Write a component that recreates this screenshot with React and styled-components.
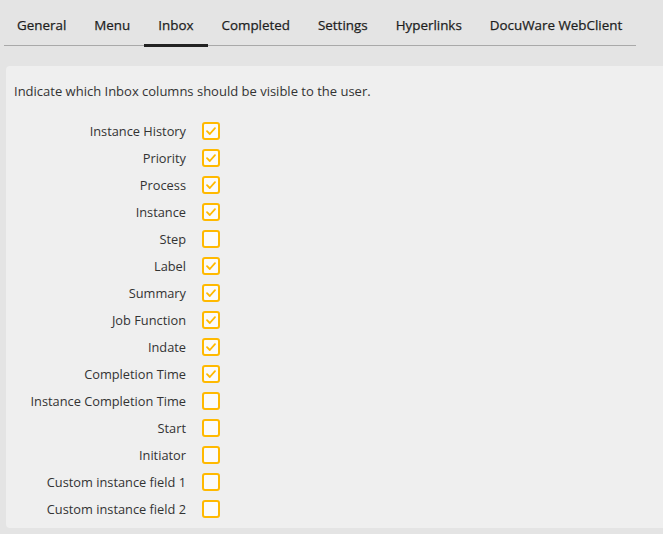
import React from "react";
import styled, { createGlobalStyle } from "styled-components";

const GlobalStyle = createGlobalStyle`
  html, body {
    margin: 0;
    padding: 0;
    background: #e4e4e4;
    font-family: "Open Sans", "Liberation Sans", Arial, sans-serif;
    color: #333;
  }
`;

const Page = styled.div`
  height: 534px;
  display: flex;
  flex-direction: column;
  padding: 0 0 6px 0;
  box-sizing: border-box;
`;

const TabBar = styled.div`
  display: inline-flex;
  align-self: flex-start;
  margin: 0 0 0 4px;
  padding: 8px 0 0 0;
  border-bottom: 1px solid #a9a9a9;
`;

const Tab = styled.div`
  position: relative;
  padding: 8px 14px 11px 14px;
  font-size: 13.4px;
  font-weight: 400;
  color: #1e1e1e;
  -webkit-text-stroke: 0.25px #1e1e1e;
  white-space: nowrap;
  &:first-child {
    padding-left: 13px;
  }
  &::after {
    content: "";
    position: absolute;
    left: 0;
    right: 0;
    bottom: -2px;
    height: 3px;
    background: ${(p) => (p.$active ? "#222" : "transparent")};
  }
`;

const Panel = styled.div`
  flex: 1;
  margin: 20px 0 0 6px;
  background: #efefef;
  border-radius: 4px 0 0 4px;
  padding: 16px 8px 0 8px;
`;

const Intro = styled.div`
  font-size: 13px;
  color: #333;
  margin-bottom: 22px;
`;

const Rows = styled.div`
  display: grid;
  grid-template-columns: 172px 18px;
  column-gap: 16px;
  row-gap: 9px;
  align-items: center;
`;

const Label = styled.div`
  font-size: 12.8px;
  text-align: right;
  line-height: 18px;
  color: #333;
  white-space: nowrap;
`;

const Box = styled.div`
  width: 18px;
  height: 18px;
  box-sizing: border-box;
  border: 2px solid #ffb900;
  border-radius: 3px;
  background: #fbfbfb;
  display: flex;
  align-items: center;
  justify-content: center;
`;

const Check = () => (
  <svg width="12" height="12" viewBox="0 0 12 12">
    <path
      d="M2 6.2 L4.8 9 L10 3.2"
      fill="none"
      stroke="#ffb900"
      strokeWidth="1.8"
      strokeLinecap="round"
      strokeLinejoin="round"
    />
  </svg>
);

const tabs = [
  "General",
  "Menu",
  "Inbox",
  "Completed",
  "Settings",
  "Hyperlinks",
  "DocuWare WebClient",
];

const columns = [
  ["Instance History", true],
  ["Priority", true],
  ["Process", true],
  ["Instance", true],
  ["Step", false],
  ["Label", true],
  ["Summary", true],
  ["Job Function", true],
  ["Indate", true],
  ["Completion Time", true],
  ["Instance Completion Time", false],
  ["Start", false],
  ["Initiator", false],
  ["Custom instance field 1", false],
  ["Custom instance field 2", false],
];

export default function App() {
  return (
    <>
      <GlobalStyle />
      <Page>
        <TabBar>
          {tabs.map((t) => (
            <Tab key={t} $active={t === "Inbox"}>
              {t}
            </Tab>
          ))}
        </TabBar>
        <Panel>
          <Intro>Indicate which Inbox columns should be visible to the user.</Intro>
          <Rows>
            {columns.map(([name, on]) => (
              <React.Fragment key={name}>
                <Label>{name}</Label>
                <Box>{on && <Check />}</Box>
              </React.Fragment>
            ))}
          </Rows>
        </Panel>
      </Page>
    </>
  );
}
